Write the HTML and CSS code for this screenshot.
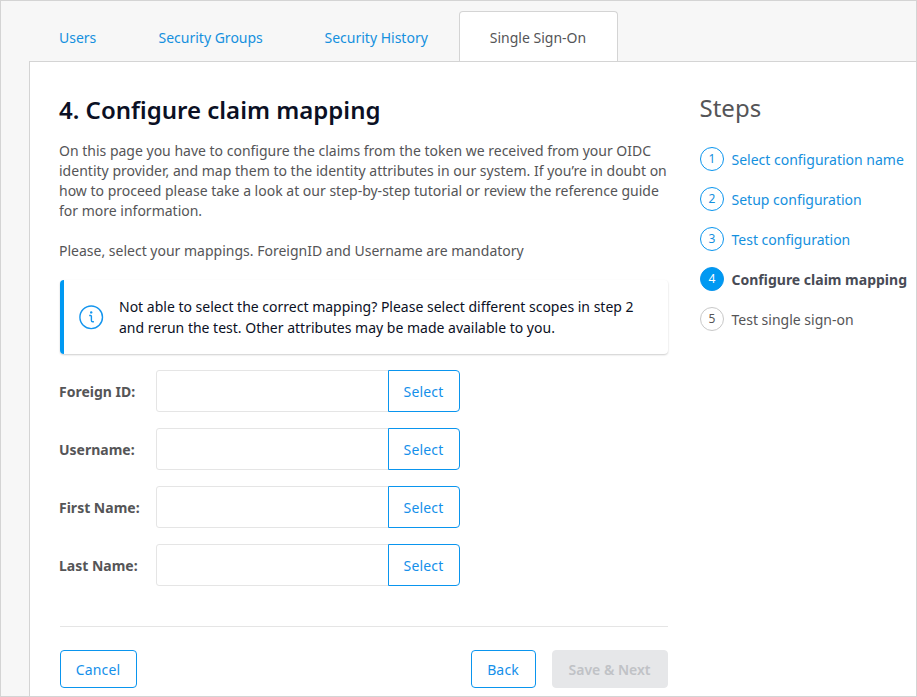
FILE: index.html
```html
<!DOCTYPE html>
<html lang="en">
<head>
<meta charset="utf-8">
<title>Single Sign-On</title>
<link rel="stylesheet" href="styles.css">
</head>
<body>
<div class="frame">
  <nav class="tabs">
    <a class="tab tab-users">Users</a>
    <a class="tab tab-groups">Security Groups</a>
    <a class="tab tab-history">Security History</a>
    <a class="tab active">Single Sign-On</a>
  </nav>
  <div class="panel">
    <main class="main">
      <h1>4. Configure claim mapping</h1>
      <p class="intro">On this page you have to configure the claims from the token we received from your OIDC<br><span class="wide">identity provider, and map them to the identity attributes in our system. If you’re in doubt on</span><br>how to proceed please take a look at our step-by-step tutorial or review the reference guide<br>for more information.</p>
      <p class="intro">Please, select your mappings. ForeignID and Username are mandatory</p>
      <div class="notice">
        <svg class="info" viewBox="0 0 24 24" width="24" height="24"><circle cx="12.2" cy="12.3" r="11.3"/><path d="M10.2 10.5h1.4q.8 0 .8.8v4.1q0 1.3 1.3 1.3h1.2"/><circle class="dot" cx="12.2" cy="7.4" r="1.2"/></svg>
        <div>Not able to select the correct mapping? Please select different scopes in step 2<br>and rerun the test. Other attributes may be made available to you.</div>
      </div>
      <div class="row"><label>Foreign ID:</label><input class="field" type="text"><button class="btn select">Select</button></div>
      <div class="row"><label>Username:</label><input class="field" type="text"><button class="btn select">Select</button></div>
      <div class="row"><label>First Name:</label><input class="field" type="text"><button class="btn select">Select</button></div>
      <div class="row"><label>Last Name:</label><input class="field" type="text"><button class="btn select">Select</button></div>
      <div class="actions">
        <button class="btn cancel">Cancel</button>
        <button class="btn back">Back</button>
        <button class="btn save" disabled>Save &amp; Next</button>
      </div>
    </main>
    <aside class="steps">
      <h2>Steps</h2>
      <div class="step"><span class="num">1</span><span class="name">Select configuration name</span></div>
      <div class="step"><span class="num">2</span><span class="name">Setup configuration</span></div>
      <div class="step"><span class="num">3</span><span class="name">Test configuration</span></div>
      <div class="step current"><span class="num">4</span><span class="name">Configure claim mapping</span></div>
      <div class="step pending"><span class="num">5</span><span class="name">Test single sign-on</span></div>
    </aside>
  </div>
</div>
</body>
</html>
```
FILE: styles.css
```css
* { box-sizing: border-box; }
body { margin: 0; font: 14px/20px "Noto Sans", sans-serif; color: #555557; }
.frame { height: 697px; overflow: hidden; background: #f7f7f7; border: 1px solid #d4d4d4; display: flex; flex-direction: column; }
.tabs { display: flex; height: 61px; flex: none; padding: 10px 0 0 58px; }
.tab { color: #1590de; padding-top: 17px; height: 50px; white-space: nowrap; }
.tab-users { width: 99px; }
.tab-groups { width: 166px; }
.tab-history { width: 135px; }
.tab-groups, .tab-history { text-indent: 0.5px; }
.active { width: 159px; padding: 16px 1px 0 0; text-align: center; color: #555557; background: #fff; border: 1px solid #d4d4d4; border-bottom: 0; border-radius: 4px 4px 0 0; }
.panel { display: flex; flex: 1; margin: -1px 0 0 28px; background: #fff; border: 1px solid #d4d4d4; border-width: 1px 0 0 1px; white-space: nowrap; }
.main { width: 609px; margin-left: 29px; flex: none; }
h1 { margin: 30px 0 14px; font-size: 24px; line-height: 35px; font-weight: 600; color: #0b1024; }
.intro { margin: 0 0 20px; }
.intro + .intro { margin-bottom: 19px; }
.wide { letter-spacing: 0.012px; }
.notice { display: flex; align-items: center; height: 74px; margin: 0 0 16px 1px; border-left: 4px solid #0099f2; border-radius: 4px; padding-left: 15px; gap: 16px; line-height: 21px; color: #0b1024; box-shadow: 0 1px 2px rgba(0,0,0,.2); }
.info { fill: none; stroke: #1495ee; stroke-width: 1.4; flex: none; overflow: visible; }
.info .dot { fill: #1495ee; stroke: none; }
.row { display: flex; height: 42px; margin-bottom: 16px; }
label { width: 97px; font-weight: 700; line-height: 43px; }
.field { width: 233px; border: 1px solid #e5e5e5; border-radius: 3px 0 0 3px; margin: 0; }
.btn { font: 400 14px/20px "Noto Sans", sans-serif; letter-spacing: 0.15px; color: #1590ea; background: #fff; border: 1px solid #0a95ee; border-radius: 4px; padding: 2px 1px 0 0; height: 38px; }
.select { width: 72px; height: 42px; margin-left: -1px; border-radius: 0 4px 4px 0; }
.actions { display: flex; margin: 40px 0 0 1px; padding-top: 23px; border-top: 1px solid #e5e5e5; }
.cancel { width: 77px; }
.back { width: 65px; margin-left: auto; }
.save { width: 116px; margin-left: 16px; background: #e6e7e9; border-color: #e6e7e9; color: #c0c2c6; font-weight: 600; letter-spacing: 0; }
.steps { margin-left: 32px; }
h2 { margin: 28px 0 21px -0.5px; font-size: 24px; line-height: 36px; font-weight: 400; color: #555557; }
.step { display: flex; align-items: center; gap: 7.5px; height: 24px; margin-bottom: 16px; color: #1590de; }
.name { padding-top: 2px; }
.num { width: 24px; height: 24px; border: 1px solid #0a95ee; border-radius: 50%; text-align: center; font-size: 12px; line-height: 22px; }
.current { color: #484b55; font-weight: 700; }
.current .num { background: #0099f2; color: #fff; font-weight: 400; }
.pending { color: #555557; }
.pending .num { border-color: #c8c8c8; }
```
